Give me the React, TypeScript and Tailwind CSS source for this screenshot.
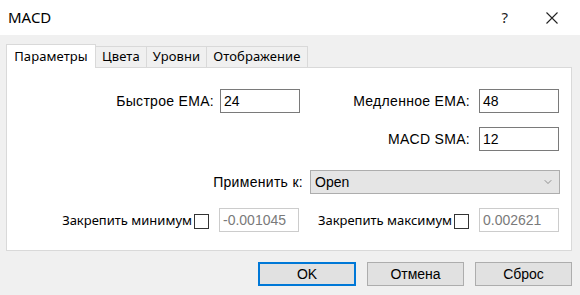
import { ChevronDown } from 'lucide-react';

// Диалог параметров индикатора MACD (в стиле окна Windows).

const seg = "font-['Noto_Sans',sans-serif]";
const arial = "font-['Liberation_Sans',Arial,sans-serif]";

function NumberBox({ value, disabled = false, className = '' }: { value: string; disabled?: boolean; className?: string }) {
  return (
    <div
      className={`flex h-[24px] items-center border bg-white pl-[3px] text-[14px] ${arial} ${
        disabled ? 'border-[#cccccc] text-[#7a7a7a]' : 'border-[#7a7a7a] text-black'
      } ${className}`}
    >
      {value}
    </div>
  );
}

function Label({ children, className = '' }: { children: React.ReactNode; className?: string }) {
  return <div className={`text-right text-[14px] tracking-[0.3px] text-black ${arial} ${className}`}>{children}</div>;
}

function CheckBox() {
  return <div className="h-[15px] w-[15px] border border-[#333333] bg-white" />;
}

const TABS = ['Цвета', 'Уровни', 'Отображение'];

export default function App() {
  return (
    <div className="flex h-[295px] w-[580px] flex-col overflow-hidden bg-[#f0f0f0]">
      {/* заголовок окна */}
      <div className="flex h-[35px] items-center bg-white pl-[8px]">
        <span className={`text-[15px] text-black ${seg}`}>MACD</span>
        <span className={`ml-auto mr-[38px] text-[15px] text-[#222] ${seg}`}>?</span>
        <svg width="12" height="12" viewBox="0 0 12 12" className="mr-[22px]">
          <path d="M0.5 0.5 L11.5 11.5 M11.5 0.5 L0.5 11.5" stroke="#222" strokeWidth="1.1" />
        </svg>
      </div>

      {/* вкладки */}
      <div className="mt-[8px] flex h-[24px] items-end pl-[6px]">
        <div className={`relative z-10 -mb-px flex h-[24px] w-[90px] items-center justify-center border border-b-0 border-[#d9d9d9] bg-white text-[13px] tracking-[0.1px] text-black ${seg}`}>
          Параметры
        </div>
        {TABS.map((t) => (
          <div
            key={t}
            className={`flex h-[21px] items-center border border-b-0 border-l-0 border-[#d9d9d9] bg-[#f0f0f0] px-[6px] text-[13px] tracking-[0.1px] text-black ${seg}`}
          >
            {t}
          </div>
        ))}
      </div>

      {/* панель параметров */}
      <div className="ml-[6px] flex h-[184px] w-[566px] flex-col border border-[#d9d9d9] bg-white">
        <div className="mt-[21px] flex h-[24px] items-center">
          <Label className="w-[207px]">Быстрое EMA:</Label>
          <NumberBox value="24" className="ml-[6px] w-[80px]" />
          <Label className="w-[170px]">Медленное EMA:</Label>
          <NumberBox value="48" className="ml-[9px] w-[80px]" />
        </div>

        <div className="mt-[14px] flex h-[24px] items-center">
          <Label className="w-[463px]">MACD SMA:</Label>
          <NumberBox value="12" className="ml-[9px] w-[80px]" />
        </div>

        <div className="mt-[19px] flex h-[24px] items-center">
          <Label className="w-[296px]">Применить к:</Label>
          <div className="ml-[7px] flex h-[24px] w-[250px] items-center border border-[#adadad] bg-[#e5e5e5] pl-[4px] pr-[5px]">
            <span className={`text-[14px] text-black ${arial}`}>Open</span>
            <ChevronDown className="ml-auto h-[12px] w-[12px] text-[#555]" strokeWidth={1.2} />
          </div>
        </div>

        <div className="mt-[14px] flex h-[24px] items-center">
          <div className={`w-[185px] pt-[2px] text-right text-[13px] text-black ${seg}`}>Закрепить минимум</div>
          <div className="ml-[2px] pt-[2px]">
            <CheckBox />
          </div>
          <NumberBox value="-0.001045" disabled className="ml-[10px] w-[80px]" />
          <div className={`ml-[12px] pt-[2px] text-[13px] text-black ${seg} w-[141px] text-right`}>Закрепить максимум</div>
          <div className="ml-[2px] pt-[2px]">
            <CheckBox />
          </div>
          <NumberBox value="0.002621" disabled className="ml-[10px] w-[80px]" />
        </div>
      </div>

      {/* кнопки */}
      <div className="mt-[11px] flex h-[24px] pl-[258px]">
        <button className={`h-[24px] w-[98px] border-2 border-[#0078d7] bg-[#e1e1e1] text-[14px] text-black ${arial}`}>OK</button>
        <button className={`ml-[11px] h-[24px] w-[97px] border border-[#adadad] bg-[#e1e1e1] text-[14px] text-black ${arial}`}>Отмена</button>
        <button className={`ml-[11px] h-[24px] w-[97px] border border-[#adadad] bg-[#e1e1e1] text-[14px] text-black ${arial}`}>Сброс</button>
      </div>
    </div>
  );
}
